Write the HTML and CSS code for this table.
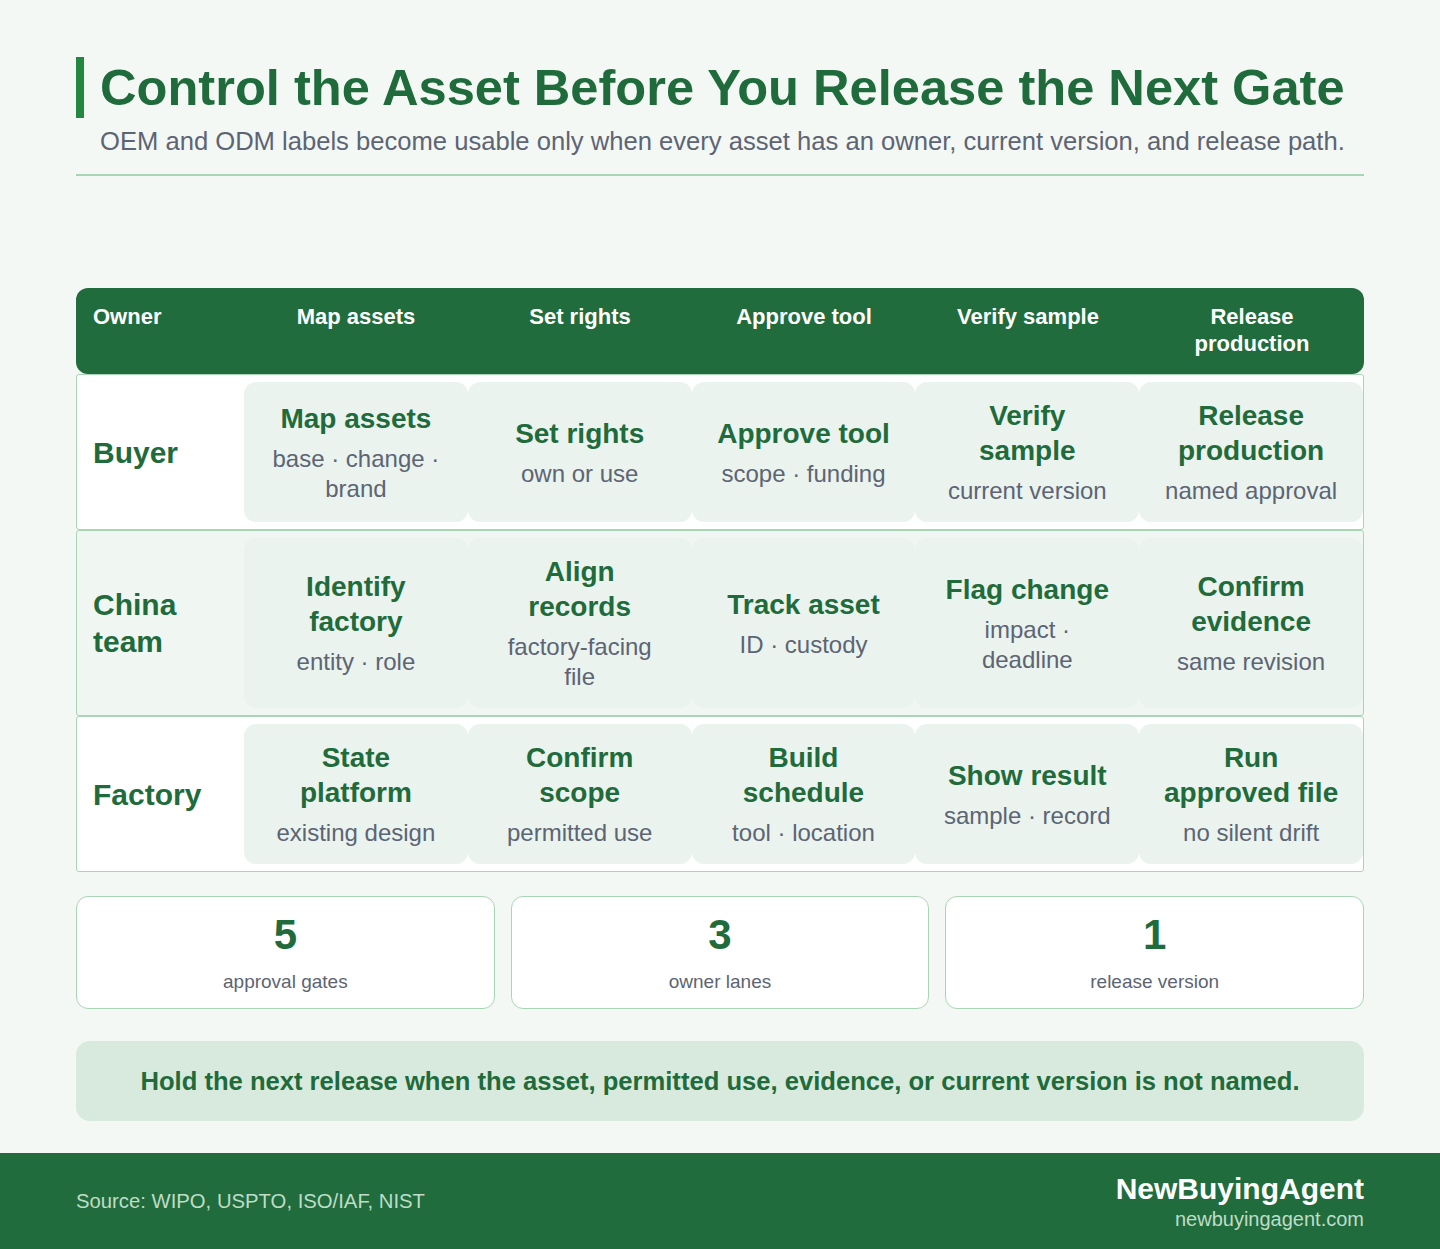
FILE: index.html
```html
<!DOCTYPE html>
<html lang="en">
<head>
<meta charset="utf-8">
<title>Control the Asset Before You Release the Next Gate</title>
<link rel="stylesheet" href="styles.css">
</head>
<body>
<main class="page">
  <header class="intro">
    <h1 class="title">Control the Asset Before You Release the Next Gate</h1>
    <p class="subtitle">OEM and ODM labels become usable only when every asset has an owner, current version, and release path.</p>
  </header>

  <section class="matrix">
    <div class="matrix-head">
      <div class="head-cell head-owner">Owner</div>
      <div class="head-cell">Map assets</div>
      <div class="head-cell">Set rights</div>
      <div class="head-cell">Approve tool</div>
      <div class="head-cell">Verify sample</div>
      <div class="head-cell">Release production</div>
    </div>

    <div class="lane">
      <div class="owner">Buyer</div>
      <div class="step"><div class="step-title">Map assets</div><div class="step-sub">base · change · brand</div></div>
      <div class="step"><div class="step-title">Set rights</div><div class="step-sub">own or use</div></div>
      <div class="step"><div class="step-title">Approve tool</div><div class="step-sub">scope · funding</div></div>
      <div class="step"><div class="step-title">Verify sample</div><div class="step-sub">current version</div></div>
      <div class="step"><div class="step-title">Release production</div><div class="step-sub">named approval</div></div>
    </div>

    <div class="lane lane-alt">
      <div class="owner">China team</div>
      <div class="step"><div class="step-title">Identify factory</div><div class="step-sub">entity · role</div></div>
      <div class="step"><div class="step-title">Align records</div><div class="step-sub">factory-facing file</div></div>
      <div class="step"><div class="step-title">Track asset</div><div class="step-sub">ID · custody</div></div>
      <div class="step"><div class="step-title">Flag change</div><div class="step-sub">impact · deadline</div></div>
      <div class="step"><div class="step-title">Confirm evidence</div><div class="step-sub">same revision</div></div>
    </div>

    <div class="lane">
      <div class="owner">Factory</div>
      <div class="step"><div class="step-title">State platform</div><div class="step-sub">existing design</div></div>
      <div class="step"><div class="step-title">Confirm scope</div><div class="step-sub">permitted use</div></div>
      <div class="step"><div class="step-title">Build schedule</div><div class="step-sub">tool · location</div></div>
      <div class="step"><div class="step-title">Show result</div><div class="step-sub">sample · record</div></div>
      <div class="step"><div class="step-title">Run approved file</div><div class="step-sub">no silent drift</div></div>
    </div>
  </section>

  <section class="stats">
    <div class="stat"><div class="stat-num">5</div><div class="stat-label">approval gates</div></div>
    <div class="stat"><div class="stat-num">3</div><div class="stat-label">owner lanes</div></div>
    <div class="stat"><div class="stat-num">1</div><div class="stat-label">release version</div></div>
  </section>

  <p class="callout">Hold the next release when the asset, permitted use, evidence, or current version is not named.</p>
</main>

<footer class="footer">
  <div class="source">Source: WIPO, USPTO, ISO/IAF, NIST</div>
  <div class="brand">
    <div class="brand-name">NewBuyingAgent</div>
    <div class="brand-url">newbuyingagent.com</div>
  </div>
</footer>
</body>
</html>
```

FILE: styles.css
```css
* { box-sizing: border-box; }

html, body {
  margin: 0;
  padding: 0;
}

body {
  background: #f4f8f5;
  font-family: "Liberation Sans", Arial, sans-serif;
  color: #1f6b3b;
}

.page {
  padding: 57px 76px 0;
}

.intro {
  border-bottom: 2px solid #a9d4b5;
  padding-bottom: 18px;
}

.title {
  margin: 0;
  border-left: 8px solid #22883f;
  padding-left: 16px;
  font-size: 50.6px;
  line-height: 61px;
  font-weight: 700;
  color: #1f6b3b;
}

.subtitle {
  margin: 8px 0 0;
  padding-left: 24px;
  font-size: 25.6px;
  line-height: 30px;
  color: #5d6473;
}

.matrix {
  margin-top: 112px;
  display: flex;
  flex-direction: column;
}

.matrix-head {
  display: grid;
  grid-template-columns: 168px repeat(5, 1fr);
  background: #216c3c;
  border-radius: 12px;
  padding: 15px 0 16px;
  min-height: 86px;
}

.head-cell {
  color: #ffffff;
  font-size: 22px;
  line-height: 27px;
  font-weight: 700;
  text-align: center;
  padding: 0 16px;
}

.head-cell.head-owner {
  text-align: left;
  padding-left: 17px;
}

.lane {
  display: grid;
  grid-template-columns: 167px repeat(5, 1fr);
  border: 1px solid #a8d5b5;
  border-radius: 3px;
  background: #ffffff;
  padding: 7px 0;
}

.lane-alt {
  background: #f0f6f2;
}

.owner {
  display: flex;
  align-items: center;
  padding: 0 16px;
  font-size: 30px;
  line-height: 37px;
  font-weight: 700;
  color: #1f6b3b;
}

.step {
  background: #eaf3ee;
  border-radius: 12px;
  padding: 16px 24px;
  display: flex;
  flex-direction: column;
  justify-content: center;
  align-items: center;
  text-align: center;
  min-height: 140px;
}

.step-title {
  font-size: 28px;
  line-height: 35px;
  font-weight: 700;
  color: #1f6b3b;
}

.step-sub {
  margin-top: 8px;
  font-size: 24px;
  line-height: 30px;
  color: #5d6473;
}

.stats {
  margin-top: 24px;
  display: grid;
  grid-template-columns: repeat(3, 1fr);
  gap: 16px;
}

.stat {
  background: #ffffff;
  border: 1px solid #a8d5b5;
  border-radius: 12px;
  padding: 16px 16px 14px;
  text-align: center;
}

.stat-num {
  font-size: 42px;
  line-height: 44px;
  font-weight: 700;
  color: #1f6b3b;
}

.stat-label {
  margin-top: 13px;
  font-size: 19px;
  line-height: 24px;
  color: #5d6473;
}

.callout {
  margin: 32px 0 0;
  background: #d8eadd;
  border-radius: 14px;
  height: 80px;
  display: flex;
  align-items: center;
  justify-content: center;
  font-size: 25.6px;
  font-weight: 700;
  color: #1f6b3b;
}

.footer {
  margin-top: 32px;
  height: 96px;
  background: #216c3c;
  padding: 0 76px;
  display: flex;
  align-items: center;
  justify-content: space-between;
}

.source {
  font-size: 20.3px;
  color: #bfdcc7;
}

.brand {
  text-align: right;
}

.brand-name {
  font-size: 30px;
  line-height: 36px;
  font-weight: 700;
  color: #ffffff;
}

.brand-url {
  font-size: 20px;
  line-height: 24px;
  color: #bfdcc7;
}
```
